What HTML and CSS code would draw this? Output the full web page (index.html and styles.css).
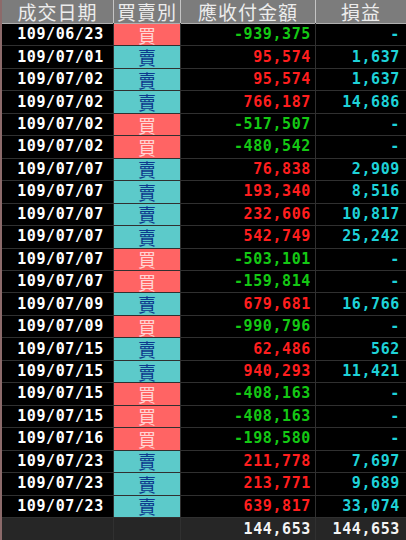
FILE: index.html
```html
<!DOCTYPE html>
<html lang="zh-TW">
<head>
    <meta charset="UTF-8">
    <meta name="viewport" content="width=device-width, initial-scale=1.0">
    <title>成交明細</title>
    <link rel="stylesheet" href="styles.css">
</head>
<body>
    <div class="sheet">
        <div class="head">成交日期</div>
        <div class="head">買賣別</div>
        <div class="head">應收付金額</div>
        <div class="head">損益</div>

        <div class="date">109/06/23</div><div class="side buy">買</div><div class="num green">-939,375</div><div class="num cyan">-</div>
        <div class="date">109/07/01</div><div class="side sell">賣</div><div class="num red">95,574</div><div class="num cyan">1,637</div>
        <div class="date">109/07/02</div><div class="side sell">賣</div><div class="num red">95,574</div><div class="num cyan">1,637</div>
        <div class="date">109/07/02</div><div class="side sell">賣</div><div class="num red">766,187</div><div class="num cyan">14,686</div>
        <div class="date">109/07/02</div><div class="side buy">買</div><div class="num green">-517,507</div><div class="num cyan">-</div>
        <div class="date">109/07/02</div><div class="side buy">買</div><div class="num green">-480,542</div><div class="num cyan">-</div>
        <div class="date">109/07/07</div><div class="side sell">賣</div><div class="num red">76,838</div><div class="num cyan">2,909</div>
        <div class="date">109/07/07</div><div class="side sell">賣</div><div class="num red">193,340</div><div class="num cyan">8,516</div>
        <div class="date">109/07/07</div><div class="side sell">賣</div><div class="num red">232,606</div><div class="num cyan">10,817</div>
        <div class="date">109/07/07</div><div class="side sell">賣</div><div class="num red">542,749</div><div class="num cyan">25,242</div>
        <div class="date">109/07/07</div><div class="side buy">買</div><div class="num green">-503,101</div><div class="num cyan">-</div>
        <div class="date">109/07/07</div><div class="side buy">買</div><div class="num green">-159,814</div><div class="num cyan">-</div>
        <div class="date">109/07/09</div><div class="side sell">賣</div><div class="num red">679,681</div><div class="num cyan">16,766</div>
        <div class="date">109/07/09</div><div class="side buy">買</div><div class="num green">-990,796</div><div class="num cyan">-</div>
        <div class="date">109/07/15</div><div class="side sell">賣</div><div class="num red">62,486</div><div class="num cyan">562</div>
        <div class="date">109/07/15</div><div class="side sell">賣</div><div class="num red">940,293</div><div class="num cyan">11,421</div>
        <div class="date">109/07/15</div><div class="side buy">買</div><div class="num green">-408,163</div><div class="num cyan">-</div>
        <div class="date">109/07/15</div><div class="side buy">買</div><div class="num green">-408,163</div><div class="num cyan">-</div>
        <div class="date">109/07/16</div><div class="side buy">買</div><div class="num green">-198,580</div><div class="num cyan">-</div>
        <div class="date">109/07/23</div><div class="side sell">賣</div><div class="num red">211,778</div><div class="num cyan">7,697</div>
        <div class="date">109/07/23</div><div class="side sell">賣</div><div class="num red">213,771</div><div class="num cyan">9,689</div>
        <div class="date">109/07/23</div><div class="side sell">賣</div><div class="num red">639,817</div><div class="num cyan">33,074</div>

        <div class="total"></div>
        <div class="total"></div>
        <div class="total num">144,653</div>
        <div class="total num">144,653</div>
    </div>
</body>
</html>
```

FILE: styles.css
```css
html, body {
    margin: 0;
    background-color: #000000;
}
.sheet {
    display: grid;
    grid-template-columns: 111px 66px 134px 90px;
    grid-template-rows: 23px repeat(22, 1fr) 22px;
    gap: 1px;
    height: 540px;
    width: 404px;
    border-left: 2px solid #8c6a6a;
    background-color: #303030;
    font-family: "DejaVu Sans Mono", "Liberation Mono", monospace;
    font-weight: bold;
    font-size: 15px;
    line-height: 1;
    letter-spacing: 0.6px;
}
.sheet > div {
    display: flex;
    align-items: center;
    background-color: #000000;
    min-height: 0;
    overflow: hidden;
}
.head {
    justify-content: center;
    background-color: #7c7c7c !important;
    color: #ececec;
    font-family: "Noto Sans CJK TC", "Noto Sans", sans-serif;
    font-weight: normal;
    font-size: 19px;
    letter-spacing: 1px;
    box-shadow: 1px 0 0 #c4c4c4, 0 1px 0 #b0b0b0;
}
.date {
    justify-content: center;
    padding-left: 6px;
    color: #ffffff;
}
.side {
    justify-content: center;
    font-family: "Noto Sans CJK TC", "Noto Sans", sans-serif;
    font-weight: normal;
    font-size: 18px;
    letter-spacing: 0;
}
.buy {
    background-color: #ff6464 !important;
    color: #ffd4d4;
}
.sell {
    background-color: #5ccaca !important;
    color: #0c3a8e;
}
.num {
    justify-content: flex-end;
    padding-right: 4px;
}
.sheet > .num:nth-child(4n) {
    padding-right: 6px;
}
.green {
    color: #14c814;
}
.red {
    color: #ff1e1e;
}
.cyan {
    color: #1ed2d8;
}
.total {
    background-color: #262626 !important;
    color: #f4f4f4;
}
```
